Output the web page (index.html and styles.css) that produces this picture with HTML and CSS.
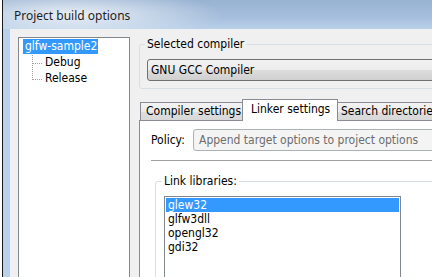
FILE: index.html
```html
<!DOCTYPE html>
<html lang="en">
<head>
<meta charset="UTF-8">
<title>Project build options</title>
<link rel="stylesheet" href="styles.css">
</head>
<body>
<div class="window">
<div class="titlebar">Project build options</div>
<div class="frame">
<div class="client">

<div class="tree">
<div class="node root"><span class="sel">glfw-sample2</span></div>
<div class="children">
<svg class="connector" width="12" height="32" viewBox="0 0 12 32">
<path d="M0.5 0V25M1 8.5H10M1 24.5H10" stroke="#a0a0a0" stroke-width="1" stroke-dasharray="1 1" fill="none"/>
</svg>
<div class="leaves">
<div class="node">Debug</div>
<div class="node">Release</div>
</div>
</div>
</div>

<div class="settings">
<fieldset class="group compiler-group">
<legend>Selected compiler</legend>
<div class="combo">GNU GCC Compiler</div>
</fieldset>

<div class="tabs">
<div class="tab tab-compiler">Compiler settings</div>
<div class="tab tab-linker active">Linker settings</div>
<div class="tab tab-search">Search directories</div>
</div>

<div class="tab-panel">
<div class="policy-row">
<span class="policy-label">Policy:</span>
<div class="combo disabled">Append target options to project options</div>
</div>
<div class="separator"></div>
<fieldset class="group libs-group">
<legend>Link libraries:</legend>
<div class="listbox">
<div class="item selected">glew32</div>
<div class="item">glfw3dll</div>
<div class="item">opengl32</div>
<div class="item">gdi32</div>
</div>
</fieldset>
</div>
</div>

</div>
</div>
</div>
</body>
</html>
```

FILE: styles.css
```css
body {
margin: 0;
background: #fff;
overflow: hidden;
font-family: "DejaVu Sans", sans-serif;
font-stretch: condensed;
font-size: 12px;
color: #000;
}

.window {
margin-left: 2px;
height: 277px;
border-left: 1px solid #1a1a1a;
display: flex;
flex-direction: column;
overflow: hidden;
}

.titlebar {
height: 29px;
flex-shrink: 0;
box-sizing: border-box;
padding: 7px 0 0 11px;
font-family: "Noto Sans", sans-serif;
font-stretch: normal;
font-size: 12px;
color: #1e1e1e;
background:
radial-gradient(ellipse 150px 26px at 70px 15px, rgba(236, 241, 247, 0.95), rgba(236, 241, 247, 0) 100%),
linear-gradient(#98b2d2, #a6bfdc 60%, #b9d0e9);
}

.frame {
flex: 1;
background: #b9d1ea;
padding-left: 7px;
display: flex;
}

.client {
flex: 1;
background: #f0f0f0;
display: flex;
padding: 8px 0 0 8px;
overflow: hidden;
}

/* tree on the left */
.tree {
width: 112px;
height: 270px;
flex-shrink: 0;
background: #fff;
border: 1px solid #828790;
padding: 1px 0 0 4px;
box-sizing: border-box;
}

.node {
height: 16px;
line-height: 15px;
white-space: nowrap;
}

.sel {
display: inline-block;
background: #3399ff;
color: #fff;
padding: 0 1px 0 2px;
height: 15px;
}

.children {
display: flex;
padding-left: 9px;
}

.connector {
display: block;
flex-shrink: 0;
}

.leaves .node {
padding-left: 1px;
}

/* right side */
.settings {
width: 330px;
flex-shrink: 0;
margin-left: 9px;
}

.group {
margin: 0;
border: 1px solid #d5dfe5;
border-radius: 3px;
}

.group legend {
padding: 0 2px;
margin-left: -2px;
line-height: 14px;
height: 14px;
}

.compiler-group {
padding: 8px 7px 7px 7px;
}

.combo {
height: 22px;
box-sizing: border-box;
border: 1px solid #707070;
border-radius: 3px;
padding-left: 3px;
line-height: 20px;
white-space: nowrap;
background: linear-gradient(#f2f2f2, #ebebeb 50%, #dddddd 51%, #cfcfcf);
}

.combo.disabled {
background: #f4f4f4;
border-color: #adb2b5;
color: #6d6d6d;
padding-left: 5px;
flex: 1;
}

.tabs {
display: flex;
align-items: flex-end;
margin: 9px 0 0 1px;
height: 22px;
}

.tab {
height: 18px;
box-sizing: border-box;
border: 1px solid #898c95;
border-bottom: none;
line-height: 16px;
white-space: nowrap;
background: linear-gradient(#f3f3f3, #ebebeb 50%, #dedede 51%, #d8d8d8);
}

.tab-compiler {
width: 102px;
padding-left: 5px;
border-right: none;
}

.tab-linker {
width: 96px;
padding-left: 8px;
}

.tab-search {
flex: 1;
padding-left: 3px;
border-left: none;
}

.tab.active {
height: 22px;
background: #fff;
line-height: 19px;
position: relative;
margin-bottom: -1px;
}

.tab-panel {
height: 200px;
background: #fff;
border: 1px solid #898c95;
padding: 8px 0 0 11px;
}

.policy-row {
display: flex;
align-items: center;
}

.policy-label {
width: 42px;
flex-shrink: 0;
}

.separator {
height: 1px;
background: #a0a0a0;
margin-top: 9px;
}

.libs-group {
margin: 13px 0 0 4px;
padding: 8px 0 0 8px;
height: 120px;
}

.listbox {
width: 237px;
height: 100px;
box-sizing: border-box;
border: 1px solid #828790;
padding: 1px;
}

.item {
height: 14px;
line-height: 14px;
padding-left: 2px;
}

.item.selected {
background: #3399ff;
color: #fff;
}
```
